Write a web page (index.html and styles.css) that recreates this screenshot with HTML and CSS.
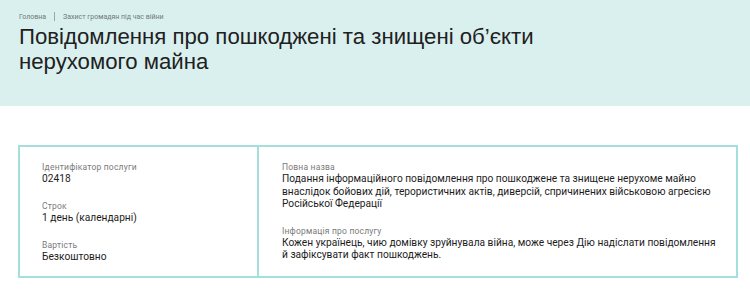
FILE: index.html
```html
<!DOCTYPE html>
<html lang="uk">
<head>
<meta charset="utf-8">
<link rel="stylesheet" href="styles.css">
</head>
<body>
<header class="hero">
  <nav class="crumbs">
    <span>Головна</span>
    <span class="sep"></span>
    <span>Захист громадян під час війни</span>
  </nav>
  <h1 class="title">Повідомлення про пошкоджені та знищені об’єкти<br>нерухомого майна</h1>
</header>
<main class="content">
  <section class="card">
    <div class="col col-left">
      <div class="item">
        <div class="label">Ідентифікатор послуги</div>
        <div class="value">02418</div>
      </div>
      <div class="item">
        <div class="label">Строк</div>
        <div class="value">1 день (календарні)</div>
      </div>
      <div class="item">
        <div class="label">Вартість</div>
        <div class="value">Безкоштовно</div>
      </div>
    </div>
    <div class="col col-right">
      <div class="item">
        <div class="label">Повна назва</div>
        <div class="value">Подання інформаційного повідомлення про пошкоджене та знищене нерухоме майно внаслідок бойових дій, терористичних актів, диверсій, спричинених військовою агресією Російської Федерації</div>
      </div>
      <div class="item">
        <div class="label">Інформація про послугу</div>
        <div class="value">Кожен українець, чию домівку зруйнувала війна, може через Дію надіслати повідомлення й зафіксувати факт пошкоджень.</div>
      </div>
    </div>
  </section>
</main>
</body>
</html>
```
FILE: styles.css
```css
* { box-sizing: border-box; }
html, body { margin: 0; padding: 0; background: #fff; }
body {
  font-family: "Roboto", "Noto Sans", sans-serif;
  color: #1c1c1c;
  width: 750px;
  overflow: hidden;
}
.hero {
  background: #daf0ee;
  height: 106px;
  padding: 12px 19px 0;
}
.crumbs {
  display: flex;
  align-items: center;
  gap: 8px;
  font-size: 7px;
  color: #6f7a79;
  height: 9px;
}
.crumbs .sep {
  width: 1px;
  height: 9px;
  background: #9aa5a4;
}
.title {
  margin: 3px 0 0;
  font-family: "Liberation Sans", Arial, sans-serif;
  font-weight: 400;
  font-size: 22.2px;
  line-height: 25px;
  color: #1e2122;
}
.content {
  padding: 39px 12px 0 18px;
}
.card {
  display: grid;
  grid-template-columns: 239px 1fr;
  border: 2px solid #a3e0dc;
  height: 133px;
}
.col-left {
  border-right: 2px solid #a3e0dc;
  padding: 14px 10px 0 22px;
}
.col-right {
  padding: 14px 18px 0 23px;
}
.item { margin-bottom: 14.5px; }
.col-right .item { margin-bottom: 14px; }
.label {
  font-size: 8.5px;
  line-height: 12px;
  color: #7a7a7a;
  letter-spacing: 0.2px;
}
.value {
  font-size: 10.2px;
  line-height: 12.5px;
  color: #1c1c1c;
}
```
